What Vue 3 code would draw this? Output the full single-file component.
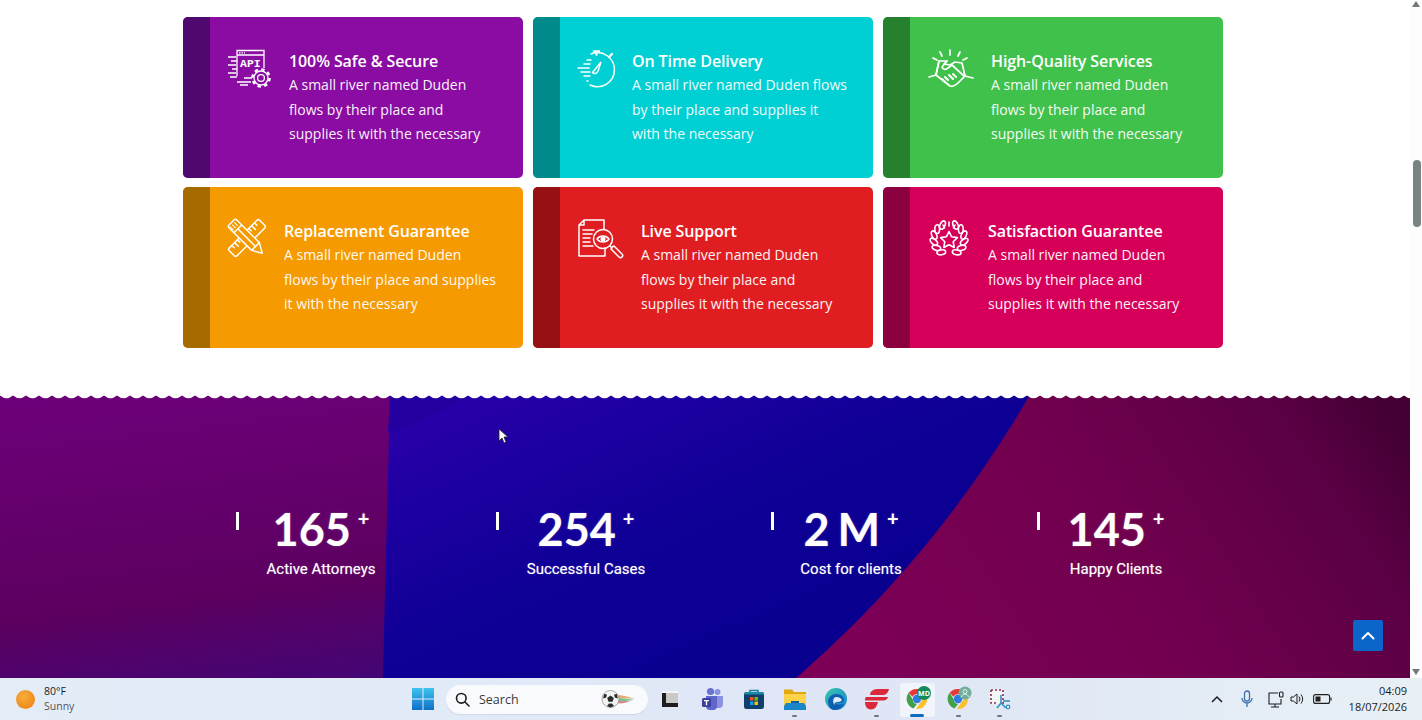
<template>
  <div class="screen">
    <div class="viewport">
      <main class="page">
        <section class="features">
          <article v-for="card in cards" :key="card.title" class="card" :style="{ background: card.color }">
            <div class="strip" :style="{ background: card.dark }"></div>
            <div class="icon" :style="{ width: card.iconBox + 'px' }">
              <svg v-if="card.icon === 'api'" width="44" height="40" viewBox="0 0 44 40" fill="none" stroke="#fff" stroke-width="1.3">
                <path d="M9 27V1.5h27V19" />
                <path d="M9 6h27" />
                <path d="M11 3.8h6" stroke-dasharray="1.5 1" />
                <text x="12" y="17.5" class="api-text" fill="#fff" stroke="none">API</text>
                <path d="M0 8h8M3 12h6M0 16h8M4 20h5M0 24h8M2 28h7" />
                <path d="M9 33h14M12 36h8M16 29h8" />
                <circle cx="33" cy="29" r="7" />
                <circle cx="33" cy="29" r="8.6" stroke-width="2.4" stroke-dasharray="3.4 3.35" />
                <circle cx="33" cy="29" r="3.4" />
              </svg>
              <svg v-else-if="card.icon === 'watch'" width="40" height="40" viewBox="0 0 40 40" fill="none" stroke="#fff" stroke-width="1.5" stroke-linecap="round">
                <path d="M13 5A17 17 0 1 1 12 36" />
                <path d="M16 2.5h5M18.5 2.5v3" stroke-width="2.4" />
                <path d="M31 8l3-3" stroke-width="2.4" />
                <path d="M9 11h4M6 15h6M0 19h11M3 23h9M6 27h6M9 32h1" />
                <path d="M14.5 23.5l8.5-10.5-3 9c-1 2.500-4 3.500-5.500 1.500z" />
              </svg>
              <svg v-else-if="card.icon === 'hands'" width="46" height="40" viewBox="0 0 46 40" fill="none" stroke="#fff" stroke-width="1.7" stroke-linecap="round" stroke-linejoin="round">
                <path d="M22 1v5M12 3l2 4M32 3l-2 4M5 9l4 2M39 9l-4 2" />
                <path d="M1 28l7-2 3-14h8l-3 3 6 1 5-3 7 1 3 13 8 2" />
                <path d="M11 12l-3 14 14 11c3 1 6-1 8-3l7-7" />
                <path d="M19 12l-5 6c1 3 4 3 6 1l4-3 12 11" />
                <path d="M17 28l3 3M21 26l4 4M25 25l3 3M14 30l3 3" stroke-width="2" />
              </svg>
              <svg v-else-if="card.icon === 'tools'" width="38" height="38" viewBox="0 0 38 38" fill="none" stroke="#fff" stroke-width="1.5" stroke-linejoin="round">
                <g transform="rotate(45 19 19)">
                  <rect x="13.5" y="-2.5" width="11" height="43" rx="2" />
                  <path d="M13.5 3h4M13.5 7h6M13.5 11h4M13.5 27h4M13.5 31h6M13.5 35h4" />
                </g>
                <g transform="rotate(-45 19 19)" fill="#f59a00">
                  <path d="M13.5 -1a2 2 0 0 1 2-2h7a2 2 0 0 1 2 2v32l-5.500 9.500-5.500-9.500z" />
                  <path d="M13.5 6h11M13.5 31h11M19 6v25" />
                  <path d="M15 -1v5M18 -1v5M21 -1v5" stroke-width="1" />
                </g>
              </svg>
              <svg v-else-if="card.icon === 'search'" width="46" height="40" viewBox="0 0 46 40" fill="none" stroke="#fff" stroke-width="1.5" stroke-linecap="round" stroke-linejoin="round">
                <path d="M6 1h20v9M6 1L1 6v31h26v-8M1 6h5V1" />
                <path d="M5 11h11M5 15h9M5 19h7M5 23h7M5 27h10" />
                <circle cx="25" cy="20" r="9.5" />
                <path d="M19 20c3-4 9-4 12 0-3 4-9 4-12 0z" />
                <circle cx="25" cy="20" r="1.8" fill="#fff" />
                <path d="M32 27l2 2" />
                <path d="M34 28l2-1 8 8a2 2 0 0 1-3 3l-8-8z" />
              </svg>
              <svg v-else width="42" height="40" viewBox="0 0 42 40" fill="none" stroke="#fff" stroke-width="1.6" stroke-linecap="round" stroke-linejoin="round">
                <ellipse v-for="a in leaves" :key="a" cx="21" cy="4.6" rx="2.4" ry="4.4" :transform="`rotate(${a} 21 20) rotate(${a > 0 ? -50 : 50} 21 4.6)`" />
                <path d="M21 12.500l2.600 5.300 5.800.8-4.200 4.100 1 5.800-5.200-2.800-5.200 2.800 1-5.800-4.200-4.100 5.800-.8z" />
                <path d="M21 3v4M15 6l1.500 3M27 6l-1.500 3" />
              </svg>
            </div>
            <div class="card-text">
              <h3>{{ card.title }}</h3>
              <p v-for="line in card.lines" :key="line">{{ line }}</p>
            </div>
          </article>
        </section>

        <section class="band">
          <svg class="band-bg" viewBox="0 0 1410 283" preserveAspectRatio="none">
            <defs>
              <linearGradient id="sideLeft" x1="0.1" y1="0" x2="0.7" y2="1">
                <stop offset="0" stop-color="#6c0078" />
                <stop offset="0.55" stop-color="#5c0060" />
                <stop offset="1" stop-color="#320a84" />
              </linearGradient>
              <linearGradient id="sideRight" x1="0" y1="0.5" x2="1" y2="0.2">
                <stop offset="0" stop-color="#7c0056" />
                <stop offset="0.5" stop-color="#70004e" />
                <stop offset="0.85" stop-color="#5a0044" />
                <stop offset="1" stop-color="#440034" />
              </linearGradient>
              <linearGradient id="middle" x1="0" y1="0" x2="0.9" y2="0.9">
                <stop offset="0" stop-color="#2c00ac" />
                <stop offset="0.5" stop-color="#0f0096" />
                <stop offset="1" stop-color="#06008c" />
              </linearGradient>
            </defs>
            <rect width="1410" height="283" fill="url(#sideLeft)" />
            <path d="M390 0C388 90 385 190 383 283H800C880 210 960 120 1030 0Z" fill="url(#middle)" />
            <path d="M1030 0C960 120 880 210 796 283H1410V0Z" fill="url(#sideRight)" />
            <path d="M390 0H470C440 18 415 30 388 38Z" fill="#2400a0" />
          </svg>
          <svg class="wave" width="100%" height="6">
            <defs>
              <pattern id="scallop" width="13" height="6" patternUnits="userSpaceOnUse">
                <path d="M0 0H13V.6Q6.5 6 0 .6Z" fill="#fff" />
              </pattern>
            </defs>
            <rect width="100%" height="6" fill="url(#scallop)" />
          </svg>
          <div class="stats">
            <div v-for="stat in stats" :key="stat.label" class="stat">
              <span class="stat-bar" :style="{ left: stat.bar + 'px' }"></span>
              <div class="stat-number">{{ stat.value }}<sup>+</sup></div>
              <div class="stat-label">{{ stat.label }}</div>
            </div>
          </div>
          <a class="to-top">
            <svg width="14" height="9" viewBox="0 0 14 9" fill="none" stroke="#fff" stroke-width="2" stroke-linecap="round" stroke-linejoin="round"><path d="M1.5 7.5L7 2l5.500 5.500" /></svg>
          </a>
          <svg class="pointer" width="11" height="16" viewBox="0 0 11 16">
            <path d="M1 1v12l3-3 2 5 2-1-2-5h4z" fill="#fff" stroke="#222" stroke-width=".8" />
          </svg>
        </section>
      </main>

      <aside class="scrollbar">
        <span class="arrow-up"></span>
        <span class="thumb"></span>
        <span class="arrow-down"></span>
      </aside>
    </div>

    <footer class="taskbar">
      <div class="weather">
        <span class="sun"></span>
        <div class="weather-text">
          <div class="temp">80°F</div>
          <div class="sky">Sunny</div>
        </div>
      </div>

      <svg class="win" width="22" height="22" viewBox="0 0 22 22">
        <defs>
          <linearGradient id="winBlue" x1="0" y1="0" x2="0" y2="1">
            <stop offset="0" stop-color="#3fc4ee" />
            <stop offset="1" stop-color="#0f70c8" />
          </linearGradient>
        </defs>
        <path d="M0 0h10.500v10.500H0zM11.500 0H22v10.500H11.500zM0 11.500h10.500V22H0zM11.500 11.500H22V22H11.500z" fill="url(#winBlue)" />
      </svg>

      <div class="search">
        <svg width="15" height="15" viewBox="0 0 15 15" fill="none" stroke="#1b1b1b" stroke-width="1.6"><circle cx="6.3" cy="6.3" r="4.8" /><path d="M10 10l4 4" stroke-linecap="round" /></svg>
        <span>Search</span>
        <svg class="ball" width="36" height="20" viewBox="0 0 36 20">
          <path d="M14 6C22 6 28 8 34 10 28 9 22 9 15 10Z" fill="#e7a86d" />
          <path d="M15 9c7 0 13 1 18 2-6 1-12 1-18 1z" fill="#7cc28f" />
          <path d="M15 12c5 0 10 0 14 0-4 2-9 3-14 2z" fill="#d98a8a" />
          <circle cx="9.5" cy="10" r="8.5" fill="#f4f4f4" stroke="#777" stroke-width=".6" />
          <path d="M9.5 6.5l3.300 2.400-1.300 3.800h-4l-1.300-3.800zM3 5l3 .5-.8 3-3 1zM16 5l-3 .5.800 3 3 1zM6 17l2-2.500h3L13 17l-3.500 1.500z" fill="#2a2a2a" />
        </svg>
      </div>

      <div class="apps">
        <div class="app">
          <svg width="18" height="18" viewBox="0 0 18 18">
            <rect x="1" y="1" width="16" height="16" fill="#f4f4f4" />
            <rect x="1" y="3" width="16" height="14" fill="#c9cac8" />
            <path d="M1 3h4v10h12v4H1z" fill="#1e1e1e" />
          </svg>
        </div>
        <div class="app">
          <svg width="24" height="24" viewBox="0 0 24 24">
            <circle cx="16.5" cy="5" r="3" fill="#8b93e0" />
            <circle cx="9.5" cy="4.5" r="3.6" fill="#6a71d0" />
            <path d="M13 9h9v8a4 4 0 0 1-4 4h-5z" fill="#8b93e0" />
            <path d="M5 9h11v10a4 4 0 0 1-4 4H9a4 4 0 0 1-4-4z" fill="#5f67cb" />
            <rect x="1" y="11" width="9" height="9" rx="1.5" fill="#3d3f9e" />
            <path d="M3 13h5v1.300H6.200v4H4.800v-4H3z" fill="#fff" />
          </svg>
        </div>
        <div class="app">
          <svg width="22" height="22" viewBox="0 0 22 22">
            <path d="M7 5V2.500h8V5" fill="none" stroke="#1b7f9e" stroke-width="1.6" />
            <rect x="1" y="4" width="20" height="17" rx="2.5" fill="#0e3f6e" />
            <path d="M1 6.500a2.500 2.500 0 0 1 2.500-2.500h15A2.500 2.500 0 0 1 21 6.500z" fill="#1d8aa8" />
            <rect x="7" y="9" width="3.5" height="3.5" fill="#f25022" />
            <rect x="11.5" y="9" width="3.5" height="3.5" fill="#7fba00" />
            <rect x="7" y="13.5" width="3.5" height="3.5" fill="#00a4ef" />
            <rect x="11.5" y="13.5" width="3.5" height="3.5" fill="#ffb900" />
          </svg>
        </div>
        <div class="app">
          <svg width="24" height="24" viewBox="0 0 24 24">
            <path d="M1 2.500h8l2 2.500h12v18H1z" fill="#e2a90f" />
            <rect x="1" y="7" width="22" height="16" fill="#fcd24b" />
            <path d="M3 16h18l2 3v4H1v-4z" fill="#1a86c8" />
            <rect x="8" y="14" width="8" height="2" fill="#0e5f9e" />
          </svg>
          <i class="dot"></i>
        </div>
        <div class="app">
          <svg width="24" height="24" viewBox="0 0 24 24">
            <defs>
              <linearGradient id="edgeA" x1="0" y1="0" x2="1" y2="1">
                <stop offset="0" stop-color="#36c8a8" />
                <stop offset="1" stop-color="#1a7fd4" />
              </linearGradient>
            </defs>
            <circle cx="12" cy="12" r="11" fill="url(#edgeA)" />
            <path d="M4 15c0-5 4-8 8-8 5 0 8 3 8 6 0 2-2 3-4 3h-4c1 2 5 2 8 0-1 4-5 7-9 7-3 0-6-2-6-5z" fill="#0b5fb0" />
            <path d="M12 10c3 0 5 1 6 3-1 1-2 2-4 2-3 0-4 1-3 3-3-2-2-8 1-8z" fill="#dfeaf6" />
          </svg>
        </div>
        <div class="app">
          <svg width="26" height="22" viewBox="0 0 26 22" fill="#d9293a">
            <path d="M6 6C7 2 11 1 14 1h11c-1 4-3 6-7 6H8C7 7 6 7 6 6z" />
            <path d="M2 9h22c-.5 2-2 3.500-5 3.500H1c0-1.500 0-2.500 1-3.500z" />
            <path d="M1 14h13c-1 3-1 3-2 5-1 1.500-3 2.500-5 2.500-4 0-6-3-6-7.500z" />
          </svg>
          <i class="dot"></i>
        </div>
        <div class="app active">
          <svg width="26" height="26" viewBox="0 0 26 26">
            <path d="M12 3a10 10 0 0 1 8.700 5H12a5 5 0 0 0-4.500 2.800L3.700 6.800A10 10 0 0 1 12 3z" fill="#e53935" />
            <path d="M3.700 6.800l4 6.500A5 5 0 0 0 12 18l-3.500 4.400A10 10 0 0 1 3.700 6.800z" fill="#43a047" />
            <path d="M20.700 8A10 10 0 0 1 11 23l4.500-7a5 5 0 0 0 .8-8z" fill="#fbc02d" />
            <circle cx="12" cy="13" r="4.2" fill="#2f7be6" />
            <circle cx="19" cy="7" r="7" fill="#138a5c" />
            <text x="19" y="9.5" class="badge-text" fill="#fff">MD</text>
          </svg>
          <i class="underline"></i>
        </div>
        <div class="app">
          <svg width="26" height="26" viewBox="0 0 26 26">
            <path d="M12 3a10 10 0 0 1 8.700 5H12a5 5 0 0 0-4.500 2.800L3.700 6.800A10 10 0 0 1 12 3z" fill="#e53935" />
            <path d="M3.700 6.800l4 6.500A5 5 0 0 0 12 18l-3.500 4.400A10 10 0 0 1 3.700 6.800z" fill="#43a047" />
            <path d="M20.700 8A10 10 0 0 1 11 23l4.500-7a5 5 0 0 0 .8-8z" fill="#fbc02d" />
            <circle cx="12" cy="13" r="4.2" fill="#2f7be6" />
            <circle cx="19" cy="7" r="6.5" fill="#6fae9c" />
            <circle cx="19" cy="5.5" r="2" fill="none" stroke="#e8f3ef" stroke-width="1" />
            <path d="M15.5 11c.5-2 2-3 3.500-3s3 1 3.500 3" fill="none" stroke="#e8f3ef" stroke-width="1" />
          </svg>
          <i class="dot"></i>
        </div>
        <div class="app">
          <svg width="24" height="24" viewBox="0 0 24 24">
            <rect x="2" y="2" width="14" height="15" rx="2" fill="#f5f5f5" />
            <path d="M3 3h12v14" fill="none" stroke="#8a2c54" stroke-width="1.6" stroke-dasharray="2 2" />
            <path d="M3 3v13h7" fill="none" stroke="#8a2c54" stroke-width="1.6" stroke-dasharray="2 2" />
            <path d="M13 8v8l5 5M13 16l-4 5" fill="none" stroke="#2f93c4" stroke-width="1.6" />
            <circle cx="20" cy="20" r="1.8" fill="none" stroke="#2f93c4" stroke-width="1.2" />
            <path d="M15 14h7" stroke="#2f93c4" stroke-width="1.6" />
          </svg>
          <i class="dot"></i>
        </div>
      </div>

      <div class="tray">
        <svg class="t-chev" width="12" height="8" viewBox="0 0 12 8" fill="none" stroke="#1d1d1d" stroke-width="1.5"><path d="M1 7l5-5 5 5" /></svg>
        <svg class="t-mic" width="12" height="18" viewBox="0 0 12 18" fill="none" stroke="#3f6fb0" stroke-width="1.3"><rect x="3.5" y="1" width="5" height="10" rx="2.5" /><path d="M1 8a5 5 0 0 0 10 0M6 13v4" /></svg>
        <svg class="t-net" width="16" height="17" viewBox="0 0 16 17" fill="none" stroke="#1f1f1f" stroke-width="1.1"><path d="M10 2H1v11h12V8M7 13v3M3 16h8" /><rect x="11.5" y="1" width="3.5" height="5" rx="1" /></svg>
        <svg class="t-vol" width="14" height="14" viewBox="0 0 14 14" fill="none" stroke="#1f1f1f" stroke-width="1"><path d="M1 5h2.500L7 2v10L3.500 9H1zM9 4.500a4 4 0 0 1 0 5M11 2.500a7 7 0 0 1 0 9" /></svg>
        <svg class="t-bat" width="19" height="10" viewBox="0 0 19 10" fill="none"><rect x=".6" y=".6" width="16" height="8.8" rx="2" stroke="#1f1f1f" stroke-width="1.1" /><rect x="2.5" y="2.5" width="5" height="5" fill="#1f1f1f" /><path d="M18 3.500v3" stroke="#1f1f1f" stroke-width="1.2" /></svg>
        <div class="clock">
          <div>04:09</div>
          <div>18/07/2026</div>
        </div>
      </div>
    </footer>
  </div>
</template>

<script setup>
// Feature cards, top to bottom. iconBox is the distance from icon to text
const cards = [
  { title: '100% Safe & Secure', icon: 'api', iconBox: 61, color: '#8a0ca2', dark: '#4f096e', lines: ['A small river named Duden', 'flows by their place and', 'supplies it with the necessary'] },
  { title: 'On Time Delivery', icon: 'watch', iconBox: 54, color: '#00d0d3', dark: '#008a8c', lines: ['A small river named Duden flows', 'by their place and supplies it', 'with the necessary'] },
  { title: 'High-Quality Services', icon: 'hands', iconBox: 63, color: '#40c14b', dark: '#26802e', lines: ['A small river named Duden', 'flows by their place and', 'supplies it with the necessary'] },
  { title: 'Replacement Guarantee', icon: 'tools', iconBox: 56, color: '#f59a00', dark: '#a66b00', lines: ['A small river named Duden', 'flows by their place and supplies', 'it with the necessary'] },
  { title: 'Live Support', icon: 'search', iconBox: 63, color: '#e01e22', dark: '#971014', lines: ['A small river named Duden', 'flows by their place and', 'supplies it with the necessary'] },
  { title: 'Satisfaction Guarantee', icon: 'laurel', iconBox: 60, color: '#d6005a', dark: '#8c0040', lines: ['A small river named Duden', 'flows by their place and', 'supplies it with the necessary'] }
]

// Counter row, bar is the little tick left of each number
const stats = [
  { value: '165', label: 'Active Attorneys', bar: 47 },
  { value: '254', label: 'Successful Cases', bar: 42 },
  { value: '2 M', label: 'Cost for clients', bar: 52 },
  { value: '145', label: 'Happy Clients', bar: 53 }
]

const leaves = [-150, -125, -100, -75, -50, -25, 25, 50, 75, 100, 125, 150]
</script>

<style>
html, body {
  margin: 0;
  overflow: hidden;
}
</style>

<style scoped>
.screen {
  display: flex;
  flex-direction: column;
  width: 1422px;
  height: 720px;
  overflow: hidden;
  font-family: "Open Sans", "Noto Sans", sans-serif;
}

.viewport {
  display: flex;
  height: 678px;
}

.page {
  flex: 1;
  display: flex;
  flex-direction: column;
  background: #fff;
}

.features {
  display: grid;
  grid-template-columns: repeat(3, 340px);
  grid-auto-rows: 161px;
  gap: 9px 10px;
  padding: 17px 0 0 183px;
  height: 395px;
  box-sizing: border-box;
  flex: none;
}

.card {
  display: flex;
  border-radius: 5px;
  overflow: hidden;
  color: #fff;
}

.strip {
  width: 27px;
  flex: none;
  margin-right: 18px;
}

.icon {
  flex: none;
  padding-top: 32px;
}

.icon svg {
  display: block;
  overflow: visible;
}

.api-text {
  font-family: "Liberation Mono", monospace;
  font-size: 11.5px;
  font-weight: 700;
}

.card-text {
  padding-top: 32px;
  white-space: nowrap;
}

.card-text h3 {
  margin: 0;
  font-size: 16px;
  font-weight: 600;
  line-height: 24px;
  letter-spacing: -0.1px;
}

.card-text p {
  margin: 0;
  font-size: 14px;
  line-height: 24.5px;
  opacity: 0.95;
}

.band {
  position: relative;
  flex: 1;
  overflow: hidden;
}

.band-bg {
  position: absolute;
  inset: 0;
  width: 100%;
  height: 100%;
}

.wave {
  position: absolute;
  top: 0;
  left: 0;
}

.stats {
  position: relative;
  display: grid;
  grid-template-columns: repeat(4, 265px);
  padding: 109px 0 0 188.5px;
  color: #fff;
  text-align: center;
}

.stat {
  position: relative;
}

.stat-bar {
  position: absolute;
  top: 8px;
  width: 3px;
  height: 18px;
  background: #fff;
}

.stat-number {
  font-family: Lato, "Open Sans", sans-serif;
  font-size: 45px;
  font-weight: 700;
  line-height: 50px;
  word-spacing: -3px;
  text-shadow: 0 0 2px rgba(255, 255, 255, 0.3);
}

.stat-number sup {
  font-size: 20px;
  font-weight: 700;
  line-height: 0;
  margin-left: 7px;
  vertical-align: 20px;
}

.stat-label {
  font-family: Roboto, "Liberation Sans", sans-serif;
  font-size: 15px;
  font-weight: 400;
  line-height: 20px;
  margin-top: 5px;
  text-shadow: 0 0 1px rgba(255, 255, 255, 0.5);
}

.to-top {
  position: absolute;
  left: 1353px;
  top: 225px;
  width: 30px;
  height: 31px;
  display: flex;
  align-items: center;
  justify-content: center;
  background: #0c66c9;
  border-radius: 2px;
}

.pointer {
  position: absolute;
  left: 498px;
  top: 33px;
}

.scrollbar {
  position: relative;
  width: 12px;
  flex: none;
  background: #fdfdfd;
}

.arrow-up,
.arrow-down {
  position: absolute;
  left: 2px;
  width: 0;
  height: 0;
  border-left: 4.5px solid transparent;
  border-right: 4.5px solid transparent;
}

.arrow-up {
  top: 1px;
  border-bottom: 6px solid #70787a;
}

.arrow-down {
  bottom: 3px;
  border-top: 6px solid #70787a;
}

.thumb {
  position: absolute;
  top: 160px;
  left: 3px;
  width: 8px;
  height: 67px;
  border-radius: 4px;
  background: #7a8384;
}

.taskbar {
  position: relative;
  display: flex;
  align-items: center;
  height: 42px;
  background: linear-gradient(90deg, #e3edf8 0%, #e1ebf8 30%, #dfe5f5 60%, #e2eaf5 80%, #e8f0f6 100%);
  color: #1c1c1c;
}

.weather {
  display: flex;
  align-items: center;
  gap: 9px;
  width: 396px;
  padding-left: 16px;
  flex: none;
}

.sun {
  width: 19px;
  height: 19px;
  border-radius: 50%;
  background: radial-gradient(circle at 40% 35%, #f5ad3a, #ee7d12);
}

.weather-text {
  font-size: 10.5px;
  line-height: 15px;
}

.sky {
  color: #555;
}

.win {
  flex: none;
}

.search {
  display: flex;
  align-items: center;
  width: 202px;
  height: 29px;
  margin-left: 12px;
  padding-left: 9px;
  box-sizing: border-box;
  background: #f8fafd;
  border-radius: 15px;
  box-shadow: 0 1px 1px rgba(0, 0, 0, 0.08);
  font-size: 12.5px;
  color: #3a3a3a;
}

.search span {
  margin-left: 9px;
}

.ball {
  margin-left: auto;
  margin-right: 11px;
}

.apps {
  display: flex;
  margin-left: 3px;
}

.app {
  position: relative;
  width: 41px;
  height: 42px;
  display: flex;
  align-items: center;
  justify-content: center;
}

.app:first-child svg {
  margin-right: 4px;
}

.app.active::before {
  content: "";
  position: absolute;
  top: 5px;
  left: 3px;
  width: 35px;
  height: 34px;
  border-radius: 3px;
  background: #f1f5fb;
}

.app svg {
  position: relative;
}

.badge-text {
  font-family: "Open Sans", sans-serif;
  font-size: 7px;
  font-weight: 700;
  text-anchor: middle;
}

.dot {
  position: absolute;
  bottom: 3px;
  left: 18px;
  width: 5px;
  height: 2px;
  border-radius: 1px;
  background: #70757e;
}

.underline {
  position: absolute;
  bottom: 3px;
  left: 13px;
  width: 14px;
  height: 3px;
  border-radius: 2px;
  background: #0f6cbd;
}

.tray {
  margin-left: auto;
  display: flex;
  align-items: center;
  padding-right: 15px;
}

.t-chev { margin-right: 18px; }
.t-mic { margin-right: 15px; }
.t-net { margin-right: 6px; }
.t-vol { margin-right: 9px; }

.clock {
  margin-left: 15px;
  width: 60px;
  font-size: 11px;
  line-height: 16px;
  text-align: right;
  white-space: nowrap;
}
</style>
